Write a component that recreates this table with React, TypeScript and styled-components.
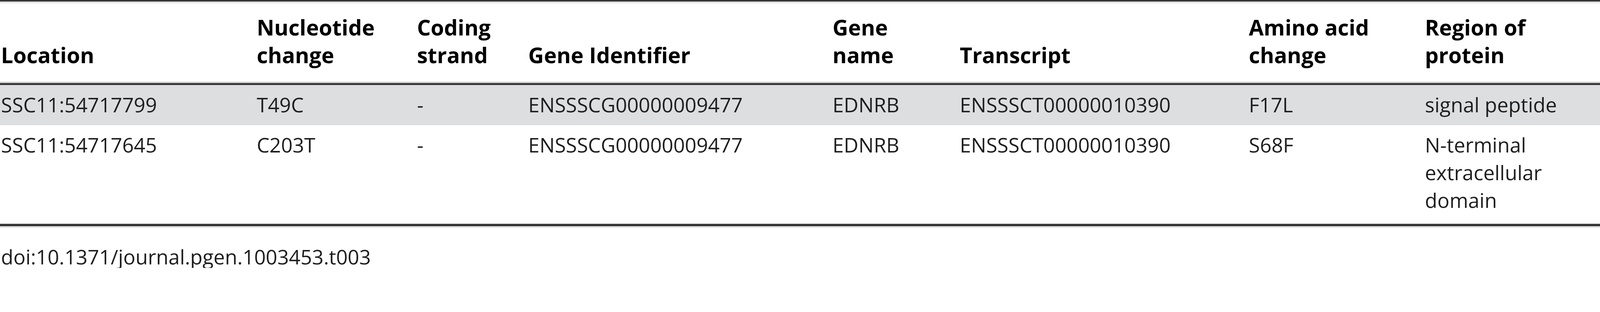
import React from "react";
import styled, { createGlobalStyle } from "styled-components";

// All sizes are given in pixels of the 4743px-wide reference and
// converted to viewport units, so the layout scales with the window.
const u = (p: number) => `${(p / 47.43).toFixed(4)}vw`;

const GlobalStyle = createGlobalStyle`
  html, body {
    margin: 0;
    padding: 0;
    background: #ffffff;
    overflow: hidden;
  }
  body {
    font-family: "Open Sans", "Noto Sans", "Liberation Sans", sans-serif;
    color: #1e1e1e;
  }
`;

const COLUMNS =
  "minmax(0, 758fr) minmax(0, 475fr) minmax(0, 330fr) minmax(0, 902fr) minmax(0, 377fr) minmax(0, 857fr) minmax(0, 522fr) minmax(0, 522fr)";

const Page = styled.div`
  width: 100%;
  display: flex;
  flex-direction: column;
`;

const Rule = styled.div<{ $h: number; $below?: string; $above?: string }>`
  height: ${(p) => u(p.$h)};
  background: #363636;
  box-shadow: ${(p) =>
    [p.$below ? `0 ${u(5)} 0 ${p.$below}` : "", p.$above ? `0 -${u(4)} 0 ${p.$above}` : ""]
      .filter(Boolean)
      .join(", ") || "none"};
`;

const HeaderRow = styled.div`
  display: grid;
  grid-template-columns: ${COLUMNS};
  align-items: end;
  padding: ${u(36)} 0 ${u(42)};
`;

const HeadCell = styled.div`
  padding-left: ${u(3)};
  font-weight: 700;
  font-size: ${u(64)};
  line-height: ${u(82)};
  color: #000;
  white-space: pre-line;
`;

const Body = styled.div`
  display: flex;
  flex-direction: column;
  padding-bottom: ${u(10)};
`;

const Row = styled.div<{ $shaded?: boolean }>`
  display: grid;
  grid-template-columns: ${COLUMNS};
  align-items: start;
  padding: ${u(17)} 0 ${u(20)};
  background: ${(p) => (p.$shaded ? "#dcdee0" : "#ffffff")};
`;

const Cell = styled.div`
  padding-left: ${u(3)};
  font-size: ${u(60)};
  line-height: ${u(82)};
  color: #1e1e1e;
  white-space: pre-line;
`;

const Caption = styled.div`
  margin-top: ${u(56)};
  padding-left: ${u(3)};
  font-size: ${u(60)};
  line-height: ${u(68)};
  color: #1e1e1e;
`;

const headers = [
  "Location",
  "Nucleotide\nchange",
  "Coding\nstrand",
  "Gene Identifier",
  "Gene\nname",
  "Transcript",
  "Amino acid\nchange",
  "Region of\nprotein",
];

const rows = [
  [
    "SSC11:54717799",
    "T49C",
    "-",
    "ENSSSCG00000009477",
    "EDNRB",
    "ENSSSCT00000010390",
    "F17L",
    "signal peptide",
  ],
  [
    "SSC11:54717645",
    "C203T",
    "-",
    "ENSSSCG00000009477",
    "EDNRB",
    "ENSSSCT00000010390",
    "S68F",
    "N-terminal\nextracellular\ndomain",
  ],
];

export default function App() {
  return (
    <>
      <GlobalStyle />
      <Page>
        <Rule $h={5} $below="#e2e2e2" />
        <HeaderRow>
          {headers.map((h) => (
            <HeadCell key={h}>{h}</HeadCell>
          ))}
        </HeaderRow>
        <Rule $h={6} $above="#d2d2d2" />
        <Body>
          {rows.map((r, i) => (
            <Row key={i} $shaded={i === 0}>
              {r.map((c, j) => (
                <Cell key={j}>{c}</Cell>
              ))}
            </Row>
          ))}
        </Body>
        <Rule $h={7} $below="#e3e3e3" $above="#f0f0f0" />
        <Caption>doi:10.1371/journal.pgen.1003453.t003</Caption>
      </Page>
    </>
  );
}
